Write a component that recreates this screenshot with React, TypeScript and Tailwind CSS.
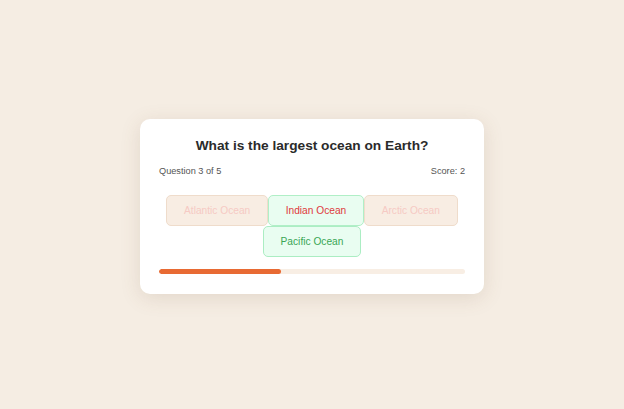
import React from "react";

interface Option {
  label: string;
  state: "faded" | "wrong" | "correct";
}

const options: Option[] = [
  { label: "Atlantic Ocean", state: "faded" },
  { label: "Indian Ocean", state: "wrong" },
  { label: "Arctic Ocean", state: "faded" },
  { label: "Pacific Ocean", state: "correct" },
];

const styles = {
  faded: "bg-[#f8ede3] border-[#efdccb] text-[#f6cac4]",
  wrong: "bg-[#e9fdf1] border-[#b0efc7] text-[#df3a40]",
  correct: "bg-[#e9fdf1] border-[#abedc3] text-[#3aa655]",
};

export default function App() {
  const progress = 40;

  return (
    <div className="min-h-screen bg-[#f5ede3] flex items-center justify-center font-['Liberation_Sans',Arial,sans-serif]">
      <div className="w-[344px] bg-white rounded-[10px] shadow-[0_4px_20px_rgba(120,90,60,0.15)] px-[19px] pt-[19px] pb-[20px] mt-[3px]">
        <h2 className="text-center font-bold text-[13.7px] leading-[16px] text-[#2b2b2b]">
          What is the largest ocean on Earth?
        </h2>

        <div className="flex justify-between mt-[11px] text-[9.2px] leading-[12px] text-[#555555]">
          <span>Question 3 of 5</span>
          <span>Score: 2</span>
        </div>

        <div className="flex flex-wrap justify-center mt-[18px]">
          {options.map((o) => (
            <button
              key={o.label}
              className={`border rounded-[5px] px-[16.7px] py-[8px] text-[10.2px] leading-[13px] ${styles[o.state]}`}
            >
              {o.label}
            </button>
          ))}
        </div>

        <div className="mt-[12px] h-[5px] rounded-full bg-[#f8eee4] overflow-hidden">
          <div className="h-full bg-[#e86a33] rounded-full" style={{ width: `${progress}%` }} />
        </div>
      </div>
    </div>
  );
}
